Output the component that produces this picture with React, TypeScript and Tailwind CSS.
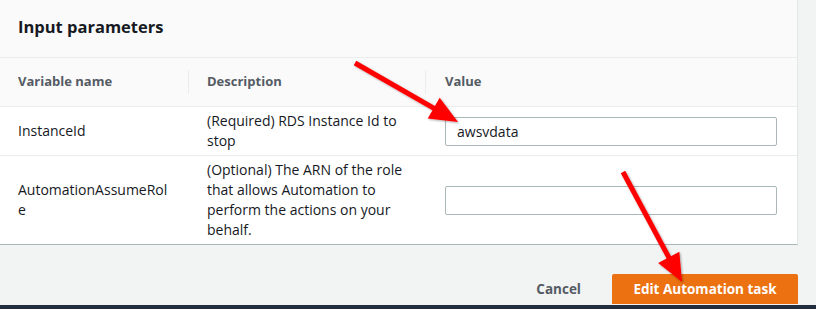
import React from 'react';

type Param = {
    name: string;
    description: string;
    value: string;
};

const params: Param[] = [
    { name: 'InstanceId', description: '(Required) RDS Instance Id to stop', value: 'awsvdata' },
    {
        name: 'AutomationAssumeRole',
        description: '(Optional) The ARN of the role that allows Automation to perform the actions on your behalf.',
        value: '',
    },
];

const Arrow: React.FC<{ x1: number; y1: number; x2: number; y2: number }> = ({ x1, y1, x2, y2 }) => {
    const dx = x2 - x1;
    const dy = y2 - y1;
    const len = Math.hypot(dx, dy);
    const ux = dx / len;
    const uy = dy / len;
    const headLen = 28;
    const half = 12;
    const bx = x2 - ux * headLen;
    const by = y2 - uy * headLen;
    const pts = `${x2},${y2} ${bx - uy * half},${by + ux * half} ${bx + uy * half},${by - ux * half}`;
    return (
        <g filter="url(#shadow)">
            <line x1={x1} y1={y1} x2={bx + ux * 2} y2={by + uy * 2} stroke="#ff0000" strokeWidth={5} />
            <polygon points={pts} fill="#ff0000" />
        </g>
    );
};

const App: React.FC = () => {
    return (
        <div
            className="relative w-[816px] h-[309px] overflow-hidden bg-[#f2f3f3] flex flex-col text-[14px] text-[#16191f]"
            style={{ fontFamily: '"Open Sans", "Noto Sans", sans-serif' }}
        >
            <div className="w-[798px] bg-white border-r border-[#e4e7e7] border-b border-b-[#aab7b8] flex flex-col">
                <div className="h-[58px] bg-[#fafafa] border-b border-[#eaeded] flex items-center px-[18px] pb-[3px]">
                    <h2 className="text-[16.5px] font-bold leading-none text-[#16191f]">Input parameters</h2>
                </div>

                <div className="grid grid-cols-[188px_237px_1fr]">
                    <div className="h-[49px] bg-[#fafafa] border-b border-[#eaeded] flex items-center pl-[18px] text-[13px] font-bold text-[#545b64]">
                        Variable name
                    </div>
                    <div className="h-[49px] bg-[#fafafa] border-b border-[#eaeded] flex items-center">
                        <div className="w-px h-[24px] bg-[#eaeded]" />
                        <span className="pl-[18px] text-[13px] font-bold text-[#545b64]">Description</span>
                    </div>
                    <div className="h-[49px] bg-[#fafafa] border-b border-[#eaeded] flex items-center">
                        <div className="w-px h-[24px] bg-[#eaeded]" />
                        <span className="pl-[19px] text-[13px] font-bold text-[#545b64]">Value</span>
                    </div>

                    {params.map((p, i) => (
                        <React.Fragment key={p.name}>
                            <div
                                className={`pl-[18px] pr-[18px] py-[4px] flex items-center leading-[20px] break-all ${i === 0 ? 'border-b border-[#eaeded]' : ''}`}
                            >
                                {p.name}
                            </div>
                            <div
                                className={`pl-[19px] pr-[16px] py-[4px] flex items-center leading-[20px] ${i === 0 ? 'border-b border-[#eaeded]' : ''}`}
                            >
                                {p.description}
                            </div>
                            <div
                                className={`pl-[20px] pr-[20px] flex items-center ${i === 0 ? 'border-b border-[#eaeded]' : ''}`}
                            >
                                <input
                                    readOnly
                                    value={p.value}
                                    className="w-full h-[29px] border border-[#aab7b8] rounded-[2px] px-[11px] text-[14px] text-[#16191f] bg-white outline-none"
                                />
                            </div>
                        </React.Fragment>
                    ))}
                </div>
            </div>

            <div className="w-[798px] flex justify-end items-start pt-[29px] gap-[11px]">
                <button className="h-[30px] px-[20px] text-[13.5px] font-bold text-[#545b64]">Cancel</button>
                <button className="h-[30px] w-[186px] rounded-t-[2px] bg-[#ec7211] text-white text-[13.5px] font-bold">
                    Edit Automation task
                </button>
            </div>

            <div className="mt-auto h-[4px] bg-[#232f3e]" />

            <svg className="absolute inset-0 pointer-events-none" width={816} height={309}>
                <defs>
                    <filter id="shadow" x="-20%" y="-20%" width="140%" height="140%">
                        <feDropShadow dx="1" dy="1" stdDeviation="1.2" floodColor="#000" floodOpacity="0.35" />
                    </filter>
                </defs>
                <Arrow x1={355} y1={63} x2={458} y2={122} />
                <Arrow x1={623} y1={172} x2={682} y2={282} />
            </svg>
        </div>
    );
};

export default App;
